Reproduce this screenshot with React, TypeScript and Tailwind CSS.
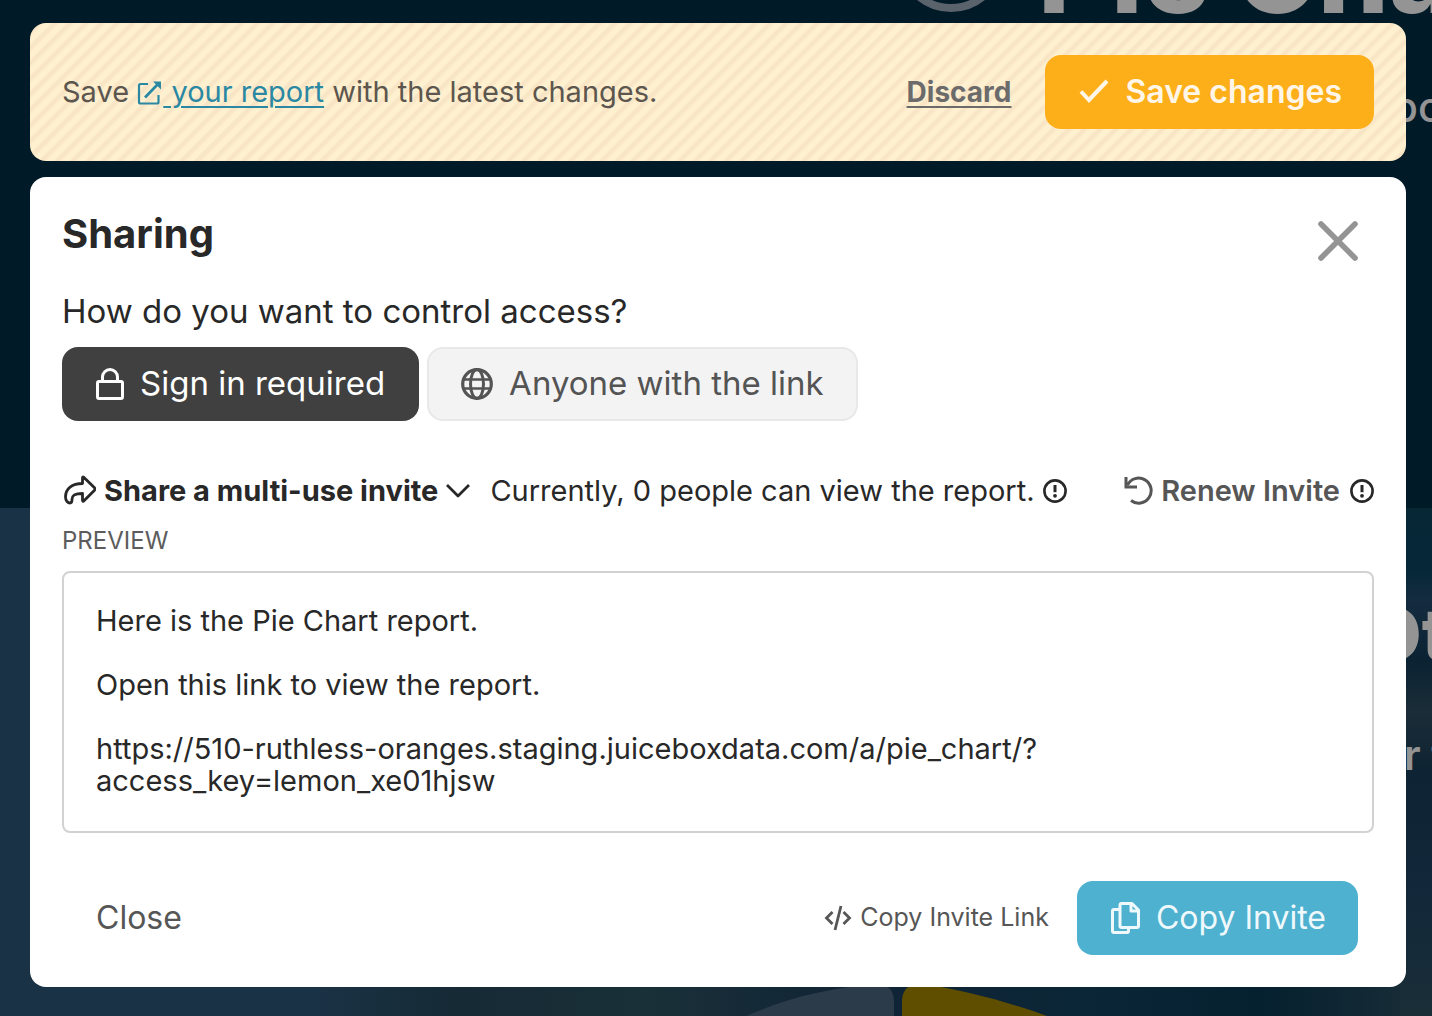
import type { ReactNode } from 'react';

function Icon({ w, h, children, className = '' }: { w: number; h: number; children: ReactNode; className?: string }) {
  return (
    <svg
      width={w}
      height={h}
      viewBox={`0 0 ${w} ${h}`}
      fill="none"
      stroke="currentColor"
      strokeWidth="3"
      strokeLinejoin="round"
      aria-hidden="true"
      className={`shrink-0 ${className}`}
    >
      {children}
    </svg>
  );
}

const InfoIcon = () => (
  <Icon w={24} h={24}>
    <circle cx="12" cy="12" r="10.6" strokeWidth="2.6" />
    <path d="M12 6v7.2" />
    <circle cx="12" cy="16.8" r="1.9" fill="currentColor" stroke="none" />
  </Icon>
);

function Backdrop() {
  return (
    <div className="absolute inset-0 -z-10 overflow-hidden bg-[#001a27] text-[#949494]" aria-hidden="true">
      <div className="absolute inset-x-0 top-[508px] bottom-0 bg-[linear-gradient(90deg,#1a3245_0%,#1a3245_22%,#152a35_32%,#1a3038_45%,#102436_60%,#0b2636_75%,#05202f_88%,#1a2e38_100%)]" />
      <div className="absolute top-[508px] right-0 bottom-0 w-8 bg-[linear-gradient(180deg,#072735_0%,#052738_12%,#142c3f_18%,#0b2233_30%,#1a2d38_40%,#0e2333_52%,#12283a_75%,#1a2e38_100%)]" />
      <svg className="absolute top-0 left-[890px]" width="122" height="14" fill="none" stroke="#5a626c" strokeWidth="8">
        <circle cx="61" cy="-42" r="50" />
      </svg>
      <svg className="absolute top-[980px] left-[740px]" width="310" height="36">
        <path d="M0 39C40 20 85 8 136 4Q154 4 154 22V36H0Z" fill="#2b3b49" />
        <path d="M162 36V20Q163 3 182 4C225 10 268 22 307 36Z" fill="#5f4e00" />
      </svg>
      <p className="absolute -top-[88px] left-[1038px] text-[112px] leading-[120px] font-extrabold whitespace-nowrap">Pie Chart</p>
      <p className="absolute top-[80px] left-[1392px] text-[42px] leading-[54px] font-medium whitespace-nowrap">bo</p>
      <p className="absolute top-[590px] left-[1366px] text-[72px] leading-[88px] font-extrabold whitespace-nowrap">Ot</p>
      <p className="absolute top-[728px] left-[1404px] text-[42px] leading-[54px] font-semibold whitespace-nowrap">r t</p>
    </div>
  );
}

function SaveBanner() {
  return (
    <section className="flex items-center justify-between rounded-2xl bg-[repeating-linear-gradient(-45deg,#fff0d0_0px,#fff0d0_4px,#f8e5c5_7px,#f8e5c5_9px,#fff0d0_11px)] p-8">
      <p className="text-[29px] leading-9 text-[#5c564e]">
        Save{' '}
        <a href="#report" className="text-[#2a88a3]">
          <Icon w={26} h={26} className="inline-block align-[-4px]">
            <path d="M11 4H3.500Q2 4 2 5.500V22q0 1.500 1.500 1.500H20q1.500 0 1.500-1.500V15" strokeWidth="2.200" />
            <path d="M8 17.500 20.500 4.500" strokeWidth="2.800" />
            <path d="M16 1.500h8v8Z" fill="currentColor" stroke="none" />
          </Icon>
          <span className="underline decoration-2 underline-offset-4">&nbsp;your report</span>
        </a>{' '}
        with the latest changes.
      </p>
      <div className="flex items-center gap-[34px]">
        <button type="button" className="text-[28px] leading-9 font-bold text-[#6b6b6b] underline decoration-2 underline-offset-4">
          Discard
        </button>
        <button type="button" className="flex h-[74px] items-center gap-4 rounded-2xl bg-[#fdaf1a] px-8 text-[32px] font-semibold text-[#fff6e8]">
          <Icon w={32} h={32}>
            <path d="M4 15.500 12 24 30 5" strokeWidth="4" strokeLinejoin="miter" />
          </Icon>
          Save changes
        </button>
      </div>
    </section>
  );
}

function AccessOptions() {
  return (
    <div className="mt-4 flex gap-2 text-[33px]">
      <button type="button" aria-pressed="true" className="flex h-[74px] items-center gap-4 rounded-2xl bg-[#404040] px-[34px] text-white">
        <Icon w={28} h={32}>
          <rect x="1.500" y="13.500" width="25" height="17" rx="1.500" />
          <path d="M6.500 13V9a7.500 7.500 0 0 1 15 0v4" />
        </Icon>
        Sign in required
      </button>
      <button
        type="button"
        aria-pressed="false"
        className="flex h-[74px] items-center gap-4 rounded-2xl border-2 border-[#e8e8e8] bg-[#f3f3f3] px-8 text-[#545454]"
      >
        <Icon w={32} h={32}>
          <circle cx="16" cy="16" r="14.300" strokeWidth="3.200" />
          <ellipse cx="16" cy="16" rx="6.500" ry="14.500" />
          <path d="M2.500 11.500h27M2.500 20.500h27" strokeWidth="2.600" />
        </Icon>
        Anyone with the link
      </button>
    </div>
  );
}

function InviteBar() {
  return (
    <div className="mt-[50px] flex h-10 items-center text-[29px]">
      <button type="button" className="flex items-center font-bold text-[#282828]">
        <Icon w={34} h={32} className="mr-2">
          <path
            d="M20.500 3v5.500C10 8.500 3.500 13.500 3.500 22c0 4 2.500 6 4.500 6 1.600 0 2-1.200 2-3.500 0-4.500 3-6 10.500-6V25q0 2 1.500.800L32.500 15.200q1-1.200 0-2.400L22 2.400q-1.500-1-1.500.6Z"
            strokeWidth="2.800"
          />
        </Icon>
        Share a multi-use invite
        <Icon w={24} h={16} className="ml-2">
          <path d="M1 2 12 13 23 2" strokeWidth="2.800" />
        </Icon>
      </button>
      <p className="ml-5 text-[#282828]">Currently, 0 people can view the report.</p>
      <button type="button" aria-label="About viewers" className="ml-2 text-[#282828]">
        <InfoIcon />
      </button>
      <button type="button" className="ml-auto flex items-center gap-2 font-semibold text-[#565656]">
        <Icon w={29} h={30}>
          <path d="M2 1v10h11" strokeLinejoin="miter" />
          <path d="M3.500 9A12.500 12.500 0 1 1 7 24.500" />
        </Icon>
        Renew Invite
      </button>
      <button type="button" aria-label="About renewing" className="ml-[10px] text-[#282828]">
        <InfoIcon />
      </button>
    </div>
  );
}

function SharingDialog() {
  return (
    <section role="dialog" aria-labelledby="sharing-title" className="mt-4 rounded-2xl bg-white p-8 text-[#282828]">
      <header className="flex justify-between">
        <h1 id="sharing-title" className="text-[40px] leading-[50px] font-bold">
          Sharing
        </h1>
        <button type="button" aria-label="Close dialog" className="mt-3 mr-4 h-10 text-[#949494]">
          <Icon w={40} h={40}>
            <path d="M3 3 37 37M37 3 3 37" strokeWidth="5.600" strokeLinecap="round" />
          </Icon>
        </button>
      </header>
      <h2 className="mt-[30px] text-[33px] leading-10">How do you want to control access?</h2>
      <AccessOptions />
      <InviteBar />
      <h3 className="mt-[14px] text-[24px] leading-8 text-[#5c5c5c]">PREVIEW</h3>
      <div className="mt-[14px] rounded-lg border-2 border-[#d2d2d2] px-8 pt-8 pb-[34px] text-[29px] leading-8">
        <p>Here is the Pie Chart report.</p>
        <p className="mt-8">Open this link to view the report.</p>
        <p className="mt-8">
          https://510-ruthless-oranges.staging.juiceboxdata.com/a/pie_chart/?
          <br />
          access_key=lemon_xe01hjsw
        </p>
      </div>
      <footer className="mt-12 flex items-center px-4 pl-[34px] text-[#565656]">
        <button type="button" className="text-[32px]">
          Close
        </button>
        <button type="button" className="ml-auto flex items-center gap-2 text-[25px]">
          <Icon w={28} h={26}>
            <path d="M8.500 7 2.500 13 8.500 19M19.500 7 25.500 13 19.500 19M17 1 11 25" strokeWidth="2.800" strokeLinejoin="miter" />
          </Icon>
          Copy Invite Link
        </button>
        <button type="button" className="ml-7 flex h-[74px] items-center gap-4 rounded-2xl bg-[#4eb1cf] pr-8 pl-[34px] text-[32px] text-[#eff9fc]">
          <Icon w={29} h={32}>
            <path d="M10.500 1.500H21L27.500 8v16q0 1.500-1.500 1.500H10.500Q9 25.500 9 24V3q0-1.500 1.500-1.500M9 7.500H3Q1.500 7.500 1.500 9v20q0 1.500 1.500 1.500h13q1.500 0 1.500-1.500v-3.500M20 2v7h7" />
          </Icon>
          Copy Invite
        </button>
      </footer>
    </section>
  );
}

export default function App() {
  return (
    <main className="relative isolate min-h-screen overflow-hidden pt-[23px] pr-[26px] pb-[29px] pl-[30px] font-['Inter',sans-serif]">
      <Backdrop />
      <SaveBanner />
      <SharingDialog />
    </main>
  );
}
